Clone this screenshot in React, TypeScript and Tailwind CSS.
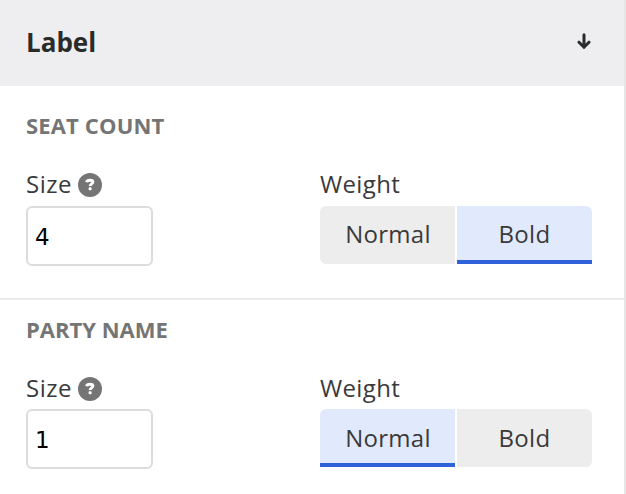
import clsx from "clsx";

type Weight = "Normal" | "Bold";

const sections: { title: string; size: string; weight: Weight }[] = [
  { title: "SEAT COUNT", size: "4", weight: "Bold" },
  { title: "PARTY NAME", size: "1", weight: "Normal" },
];

const weights: Weight[] = ["Normal", "Bold"];

function HelpIcon() {
  return (
    <span className="flex h-6 w-6 items-center justify-center rounded-full bg-[#757575] text-white">
      <svg width="10" height="14" viewBox="0 0 10 14" fill="none">
        <path
          d="M1.6 4.2C1.9 2.8 3.1 2.2 5 2.2c1.8 0 2.9.6 2.9 1.8C7.9 5.8 5.1 5.9 5.1 8.1"
          stroke="currentColor"
          strokeWidth="2.9"
        />
        <rect x="3.6" y="9.2" width="3" height="3" rx="0.8" fill="currentColor" />
      </svg>
    </span>
  );
}

function WeightToggle({ value }: { value: Weight }) {
  return (
    <div className="flex h-[58px] w-[272px] gap-[2px]">
      {weights.map((weight) => (
        <button
          key={weight}
          type="button"
          className={clsx(
            "w-[135px] border-b-4 text-[24px] leading-none tracking-[0.3px] text-[#3a3a3a]",
            value === "Bold" ? "pt-[2px]" : "pt-[3px]",
            weight === "Normal" ? "rounded-tl-[6px] pl-px" : "rounded-tr-[6px]",
            weight === value
              ? "border-[#2f62d9] bg-[#e1eafd]"
              : "border-[#ededed] bg-[#ededed]",
            weight !== value && (weight === "Normal" ? "rounded-bl-[6px]" : "rounded-br-[6px]")
          )}
        >
          {weight}
        </button>
      ))}
    </div>
  );
}

export default function App() {
  return (
    <div className="h-[494px] w-[626px] overflow-hidden border-r-2 border-[#e6e6e6] bg-white font-['Open_Sans',sans-serif] text-[#3a3a3a]">
      <header className="flex h-[86px] items-center justify-between bg-[#eeeef0] pr-[33px] pb-[2px] pl-[26px] text-[#2a2b2b]">
        <h1 className="text-[26px] leading-8 font-bold">Label</h1>
        <svg
          width="14"
          height="18"
          viewBox="0 0 14 18"
          fill="none"
          stroke="currentColor"
          strokeWidth="3"
          strokeLinecap="round"
        >
          <path d="M7 1.7v12.5M2 9.2l5 5 5-5" />
        </svg>
      </header>

      {sections.map((section, index) => (
        <section
          key={section.title}
          className={clsx(
            "pr-8 pl-[26px]",
            index === 0 ? "h-[214px] border-b-2 border-[#ededed] pt-[25px]" : "pt-[15px]"
          )}
        >
          <h2
            className={clsx(
              "text-[22px] leading-[28px] font-bold text-[#757575]",
              index === 0 ? "tracking-[0.15px]" : "tracking-normal"
            )}
          >
            {section.title}
          </h2>
          <div className="mt-7 flex justify-between">
            <div>
              <div
                className={clsx(
                  "flex items-center gap-[6px]",
                  index === 0 ? "h-[39px] pb-[4px]" : "h-[38px] pb-[2px]"
                )}
              >
                <span
                  className={clsx(
                    "text-[24px] leading-8 tracking-[0.5px]",
                    index === 0 ? "pb-px" : "pb-[2px]"
                  )}
                >
                  Size
                </span>
                <HelpIcon />
              </div>
              <input
                defaultValue={section.size}
                className="h-[60px] w-[127px] rounded-[6px] border-2 border-[#dcdcdc] bg-white px-[7px] pt-[2px] font-['DejaVu_Sans',sans-serif] text-[23px] text-black outline-none"
              />
            </div>
            <div>
              <div
                className={clsx(
                  "flex items-center pb-[5px] text-[24px] leading-8 tracking-[0.35px]",
                  index === 0 ? "h-[39px]" : "h-[38px]"
                )}
              >
                Weight
              </div>
              <WeightToggle value={section.weight} />
            </div>
          </div>
        </section>
      ))}
    </div>
  );
}
